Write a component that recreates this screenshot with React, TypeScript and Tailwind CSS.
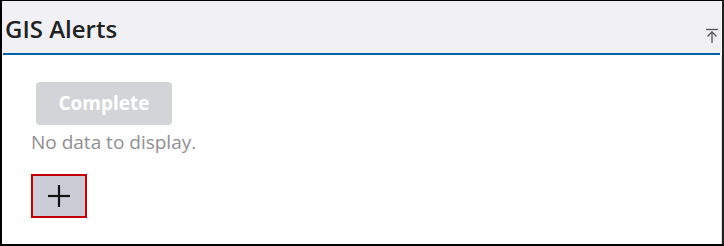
import React from "react";

const font = { fontFamily: '"Open Sans", "Noto Sans", sans-serif' };

const CollapseIcon = () => (
  <svg width="14" height="16" viewBox="0 0 14 16" className="text-[#555]">
    <line x1="1" y1="1.5" x2="13" y2="1.5" stroke="currentColor" strokeWidth="1.3" />
    <line x1="7" y1="4" x2="7" y2="15" stroke="currentColor" strokeWidth="1.3" />
    <polyline points="2.5,8.5 7,4 11.5,8.5" fill="none" stroke="currentColor" strokeWidth="1.3" />
  </svg>
);

const App = () => (
  <div className="w-[724px] h-[246px] bg-white" style={font}>
    <div className="h-full border-l-2 border-t border-r-2 border-b-2 border-black border-r-[#222] flex flex-col">
      <div className="h-[52px] bg-[#f0f0f5] flex items-end justify-between pl-[3px] pr-[3px] pb-[9px]">
        <h1 className="text-[24px] leading-[30px] font-semibold text-[#222]">GIS Alerts</h1>
        <CollapseIcon />
      </div>
      <div className="h-[2px] bg-[#0063a3] ml-[1px] mr-[2px]" />
      <div className="flex-1 border-r border-[#ddd] pl-[29px] pt-[27px]">
        <button className="ml-[5px] w-[136px] h-[43px] rounded-[4px] bg-[#d3d4d8] text-white text-[19px] font-bold">
          Complete
        </button>
        <p className="mt-[4px] text-[19px] leading-[26px] text-[#8f8f8f]">No data to display.</p>
        <button className="mt-[19px] w-[56px] h-[44px] border-2 border-[#c00000] bg-[#cbccd6] flex items-center justify-center">
          <svg width="24" height="24" viewBox="0 0 24 24">
            <line x1="1" y1="12" x2="23" y2="12" stroke="#111" strokeWidth="2.2" />
            <line x1="12" y1="1" x2="12" y2="23" stroke="#111" strokeWidth="2.2" />
          </svg>
        </button>
      </div>
    </div>
  </div>
);

export default App;
